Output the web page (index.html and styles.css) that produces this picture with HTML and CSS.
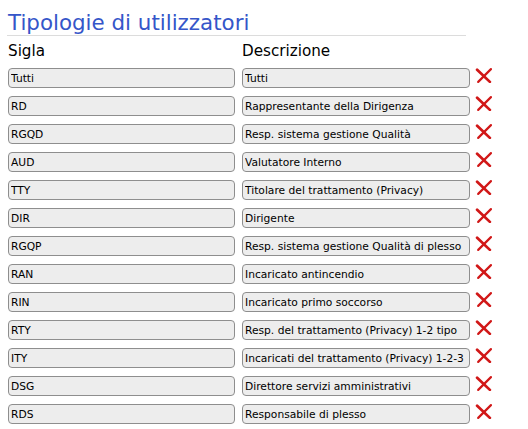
FILE: index.html
```html
<!DOCTYPE html>
<html lang="it">
<head>
  <meta charset="UTF-8">
  <title>Tipologie di utilizzatori</title>
  <link rel="stylesheet" href="styles.css">
</head>
<body>
  <h1 class="title">Tipologie di utilizzatori</h1>

  <div class="grid">
    <div class="head">Sigla</div>
    <div class="head">Descrizione</div>
    <div></div>

    <input class="field" type="text" value="Tutti">
    <input class="field" type="text" value="Tutti">
    <a class="del" href="#"><svg viewBox="0 0 16 14"><path d="M2 1.5 L14 13" /><path d="M15 1 L3 13" class="thin"/></svg></a>

    <input class="field" type="text" value="RD">
    <input class="field" type="text" value="Rappresentante della Dirigenza">
    <a class="del" href="#"><svg viewBox="0 0 16 14"><path d="M2 1.5 L14 13" /><path d="M15 1 L3 13" class="thin"/></svg></a>

    <input class="field" type="text" value="RGQD">
    <input class="field" type="text" value="Resp. sistema gestione Qualità">
    <a class="del" href="#"><svg viewBox="0 0 16 14"><path d="M2 1.5 L14 13" /><path d="M15 1 L3 13" class="thin"/></svg></a>

    <input class="field" type="text" value="AUD">
    <input class="field" type="text" value="Valutatore Interno">
    <a class="del" href="#"><svg viewBox="0 0 16 14"><path d="M2 1.5 L14 13" /><path d="M15 1 L3 13" class="thin"/></svg></a>

    <input class="field" type="text" value="TTY">
    <input class="field" type="text" value="Titolare del trattamento (Privacy)">
    <a class="del" href="#"><svg viewBox="0 0 16 14"><path d="M2 1.5 L14 13" /><path d="M15 1 L3 13" class="thin"/></svg></a>

    <input class="field" type="text" value="DIR">
    <input class="field" type="text" value="Dirigente">
    <a class="del" href="#"><svg viewBox="0 0 16 14"><path d="M2 1.5 L14 13" /><path d="M15 1 L3 13" class="thin"/></svg></a>

    <input class="field" type="text" value="RGQP">
    <input class="field" type="text" value="Resp. sistema gestione Qualità di plesso">
    <a class="del" href="#"><svg viewBox="0 0 16 14"><path d="M2 1.5 L14 13" /><path d="M15 1 L3 13" class="thin"/></svg></a>

    <input class="field" type="text" value="RAN">
    <input class="field" type="text" value="Incaricato antincendio">
    <a class="del" href="#"><svg viewBox="0 0 16 14"><path d="M2 1.5 L14 13" /><path d="M15 1 L3 13" class="thin"/></svg></a>

    <input class="field" type="text" value="RIN">
    <input class="field" type="text" value="Incaricato primo soccorso">
    <a class="del" href="#"><svg viewBox="0 0 16 14"><path d="M2 1.5 L14 13" /><path d="M15 1 L3 13" class="thin"/></svg></a>

    <input class="field" type="text" value="RTY">
    <input class="field" type="text" value="Resp. del trattamento (Privacy) 1-2 tipo">
    <a class="del" href="#"><svg viewBox="0 0 16 14"><path d="M2 1.5 L14 13" /><path d="M15 1 L3 13" class="thin"/></svg></a>

    <input class="field" type="text" value="ITY">
    <input class="field" type="text" value="Incaricati del trattamento (Privacy) 1-2-3">
    <a class="del" href="#"><svg viewBox="0 0 16 14"><path d="M2 1.5 L14 13" /><path d="M15 1 L3 13" class="thin"/></svg></a>

    <input class="field" type="text" value="DSG">
    <input class="field" type="text" value="Direttore servizi amministrativi">
    <a class="del" href="#"><svg viewBox="0 0 16 14"><path d="M2 1.5 L14 13" /><path d="M15 1 L3 13" class="thin"/></svg></a>

    <input class="field" type="text" value="RDS">
    <input class="field" type="text" value="Responsabile di plesso">
    <a class="del" href="#"><svg viewBox="0 0 16 14"><path d="M2 1.5 L14 13" /><path d="M15 1 L3 13" class="thin"/></svg></a>
  </div>
</body>
</html>
```

FILE: styles.css
```css
/* Basic reset */
* {
  margin: 0;
  padding: 0;
  box-sizing: border-box;
}

body {
  font-family: 'DejaVu Sans', Verdana, sans-serif;
  background: #fff;
  color: #000;
  padding: 8px 8px 0 8px;
}

/* Page title */
.title {
  font-size: 21.4px;
  font-weight: normal;
  color: #3556c9;
  line-height: 24px;
  padding-top: 3px;
  width: 459px;
  margin-left: -1px;
  padding-left: 1px;
  border-bottom: 1px solid #dcdcdc;
}

/* Form grid */
.grid {
  display: grid;
  grid-template-columns: 227px 228px 20px;
  column-gap: 7px;
  row-gap: 8px;
  margin-top: 4px;
  align-items: center;
}

.head {
  font-size: 15.2px;
  line-height: 18px;
  padding-top: 2px;
}

.field {
  height: 20px;
  width: 100%;
  font-family: 'DejaVu Sans', Verdana, sans-serif;
  font-size: 10.7px;
  color: #000;
  background: #ededed;
  border: 1px solid #8e8e8e;
  border-radius: 4px;
  padding: 0 2px;
  outline: none;
}

.del {
  display: block;
  align-self: start;
  width: 17px;
  height: 15px;
  margin-left: -2px;
}

.del svg {
  display: block;
  width: 17px;
  height: 15px;
  fill: none;
  stroke: #d11818;
  stroke-width: 2.6;
  stroke-linecap: round;
}

.del svg .thin {
  stroke-width: 2;
}
```
